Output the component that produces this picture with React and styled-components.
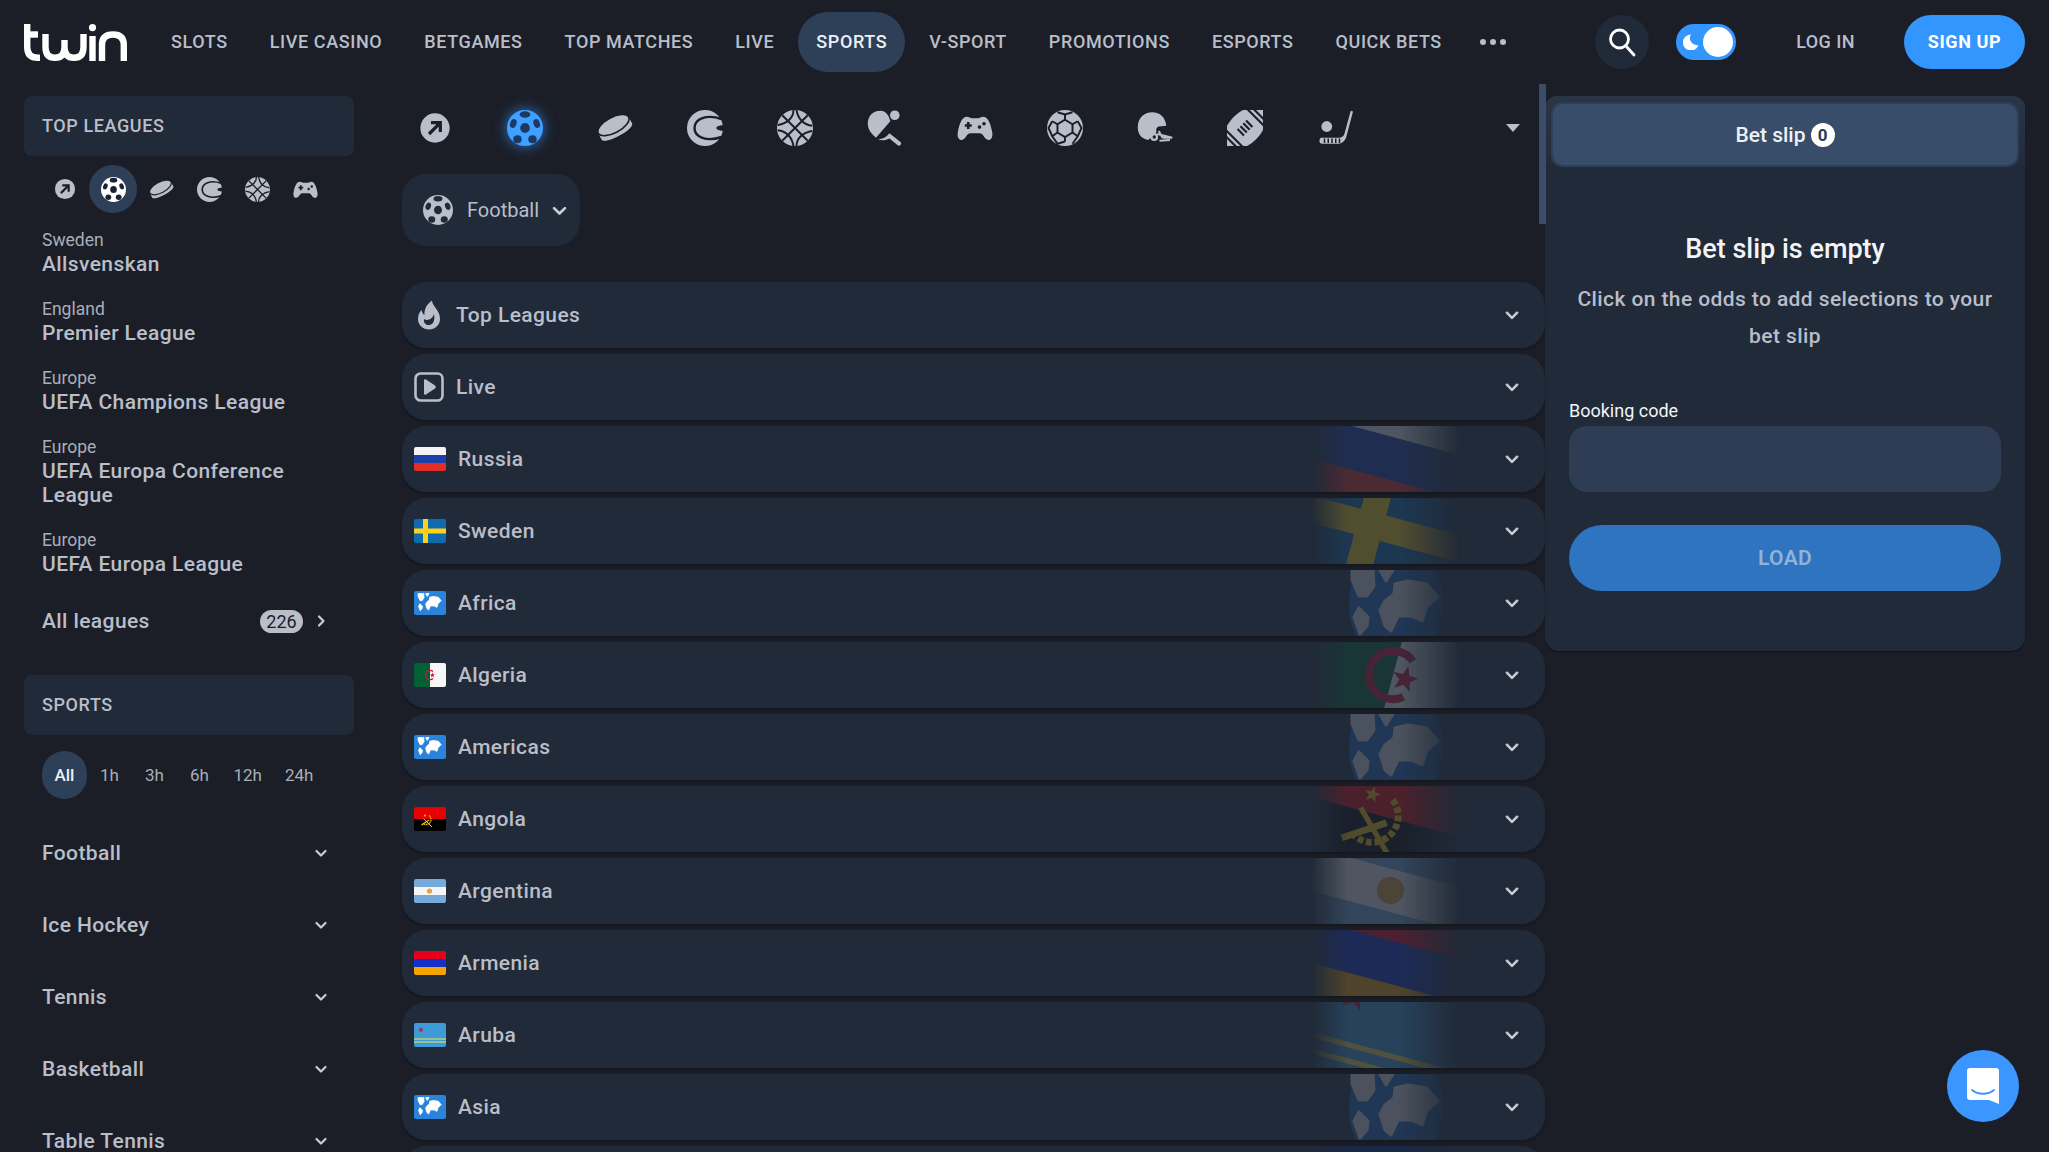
import React from 'react';
import styled, { createGlobalStyle } from 'styled-components';

const BG = '#1b1e27';
const CARD = '#212a38';
const TXT = '#b9bec9';
const HOLE = '#1b1e27';

const Global = createGlobalStyle`
  html, body { margin: 0; padding: 0; height: 100%; overflow: hidden; background: ${BG}; }
  * { box-sizing: border-box; }
  body { font-family: Roboto, "Liberation Sans", sans-serif; color: ${TXT}; }
`;

const Page = styled.div`
  position: relative;
  height: 100vh;
  overflow: hidden;
  background: ${BG};
`;
const Header = styled.header`
  display: flex;
  align-items: center;
  height: 84px;
  padding: 0 24px;
`;
const Logo = styled.svg`
  width: 103px;
  height: 37px;
  flex: none;
  margin-right: 26px;
`;
const Nav = styled.nav`
  display: flex;
  align-items: center;
  gap: 6px;
`;
const NavItem = styled.a`
  display: flex;
  align-items: center;
  height: 60px;
  padding: 0 18px 2px;
  border-radius: 30px;
  font-size: 18px;
  font-weight: 500;
  letter-spacing: 0.6px;
  white-space: nowrap;
  color: ${(p) => (p.$active ? '#eef0f4' : TXT)};
  background: ${(p) => (p.$active ? '#2e3f58' : 'transparent')};
`;
const Dots = styled.div`
  display: flex;
  gap: 4px;
  margin-left: 14px;
  i { width: 6px; height: 6px; border-radius: 50%; background: ${TXT}; display: block; }
`;
const HeaderRight = styled.div`
  margin-left: auto;
  display: flex;
  align-items: center;
`;
const SearchBtn = styled.button`
  width: 54px;
  height: 54px;
  border: 0;
  padding: 0;
  border-radius: 50%;
  background: ${CARD};
  display: flex;
  align-items: center;
  justify-content: center;
  color: #fff;
`;
const Toggle = styled.div`
  position: relative;
  width: 60px;
  height: 36px;
  border-radius: 18px;
  background: #3396ff;
  margin-left: 27px;
  display: flex;
  align-items: center;
  justify-content: flex-end;
  padding-right: 3px;
`;
const Knob = styled.span`
  width: 30px;
  height: 30px;
  border-radius: 50%;
  background: #fff;
`;
const Moon = styled.svg`
  position: absolute;
  left: 7px;
  top: 10px;
  width: 16px;
  height: 16px;
`;
const LogIn = styled.a`
  margin-left: 60px;
  padding-bottom: 2px;
  font-size: 18px;
  font-weight: 500;
  letter-spacing: 0.45px;
  color: ${TXT};
`;
const SignUp = styled.button`
  margin-left: 49px;
  width: 121px;
  height: 54px;
  border: 0;
  padding: 0 0 2px;
  border-radius: 27px;
  background: #3396ff;
  color: #fff;
  font-family: inherit;
  font-size: 18px;
  font-weight: 700;
  letter-spacing: 0.6px;
`;
const Body = styled.main`
  display: grid;
  grid-template-columns: 378px 1143px 480px;
  padding: 12px 0 0 24px;
  align-items: start;
`;
const Left = styled.aside`
  width: 330px;
`;
const Center = styled.section`
  width: 1143px;
  position: relative;
`;
const Right = styled.aside`
  width: 480px;
`;
const BlockHead = styled.div`
  height: 60px;
  border-radius: 8px;
  background: ${CARD};
  padding: 0 0 2px 18px;
  display: flex;
  align-items: center;
  font-size: 18px;
  font-weight: 500;
  letter-spacing: 0.6px;
  color: ${TXT};
  margin-top: ${(p) => p.$top || 0}px;
`;
const MiniIcons = styled.div`
  display: flex;
  margin: 9px 0 15px 17px;
`;
const MiniIcon = styled.div`
  width: 48px;
  height: 48px;
  border-radius: 50%;
  display: flex;
  align-items: center;
  justify-content: center;
  background: ${(p) => (p.$active ? '#2e3f58' : 'transparent')};
  color: ${(p) => (p.$active ? '#fff' : TXT)};
  --hole: ${(p) => (p.$active ? '#1b2230' : HOLE)};
`;
const LeagueList = styled.div`
  padding: 0 18px;
`;
const League = styled.div`
  padding-bottom: 21px;
`;
const LeagueCountry = styled.div`
  font-size: 17.5px;
  line-height: 24px;
  color: #a9aeb9;
`;
const LeagueName = styled.div`
  font-size: 21px;
  line-height: 24px;
  font-weight: 500;
  letter-spacing: 0.4px;
  color: ${TXT};
`;
const AllLeagues = styled.div`
  display: flex;
  align-items: center;
  height: 48px;
  padding: 0 26px 0 18px;
  font-size: 21px;
  font-weight: 500;
  letter-spacing: 0.4px;
  color: ${TXT};
`;
const Count = styled.span`
  margin-left: auto;
  width: 43px;
  height: 23px;
  border-radius: 12px;
  background: ${TXT};
  color: #1b1e27;
  font-size: 18px;
  font-weight: 400;
  letter-spacing: 0;
  display: flex;
  align-items: center;
  justify-content: center;
`;
const CountArrow = styled.span`
  margin-left: 11px;
  display: flex;
`;
const Tabs = styled.div`
  display: flex;
  margin: 16px 0 18px 18px;
`;
const Tab = styled.div`
  height: 48px;
  min-width: 45px;
  padding: 0 11.5px;
  border-radius: 24px;
  display: flex;
  align-items: center;
  justify-content: center;
  font-size: 17px;
  font-weight: ${(p) => (p.$active ? 500 : 400)};
  color: ${(p) => (p.$active ? '#eef0f4' : '#a9aeb9')};
  background: ${(p) => (p.$active ? '#2e3f58' : 'transparent')};
`;
const SportRow = styled.div`
  height: 72px;
  display: flex;
  align-items: center;
  justify-content: space-between;
  padding: 0 26px 0 18px;
  font-size: 21px;
  font-weight: 500;
  letter-spacing: 0.4px;
  color: ${TXT};
`;
const SportStrip = styled.div`
  display: flex;
  align-items: center;
  height: 64px;
  margin-bottom: 14px;
  gap: 24px;
`;
const StripIcon = styled.div`
  width: 66px;
  height: 64px;
  display: flex;
  align-items: center;
  justify-content: center;
  color: ${(p) => (p.$active ? '#3fa0ff' : TXT)};
  --hole: ${(p) => (p.$active ? '#1a3a63' : HOLE)};
  filter: ${(p) => (p.$active ? 'drop-shadow(0 0 7px rgba(51,150,255,.75))' : 'none')};
`;
const Caret = styled.span`
  margin-left: auto;
  margin-right: 25px;
  width: 0;
  height: 0;
  border-left: 7px solid transparent;
  border-right: 7px solid transparent;
  border-top: 8px solid ${TXT};
`;
const Scrollbar = styled.div`
  position: absolute;
  left: 1137px;
  top: -12px;
  width: 7px;
  height: 140px;
  background: #3a4d69;
`;
const Dropdown = styled.div`
  display: flex;
  align-items: center;
  width: 178px;
  height: 72px;
  border-radius: 24px;
  background: ${CARD};
  padding-left: 21px;
  color: ${TXT};
  font-size: 20px;
  --hole: ${CARD};
  span { margin: 0 12px 0 14px; }
`;
const Rows = styled.div`
  display: flex;
  flex-direction: column;
  gap: 6px;
  margin-top: 36px;
`;
const Row = styled.div`
  position: relative;
  height: 66px;
  flex: none;
  border-radius: 24px;
  background: ${CARD};
  overflow: hidden;
  display: flex;
  align-items: center;
  padding: 0 25px 0 12px;
  box-shadow: 0 2px 3px rgba(0, 0, 0, 0.25);
  font-size: 21px;
  font-weight: 500;
  letter-spacing: 0.4px;
  color: ${TXT};
`;
const RowLabel = styled.span`
  margin-left: 12px;
`;
const RowChevron = styled.span`
  margin-left: auto;
  display: flex;
  position: relative;
`;
const Mark = styled.svg`
  position: absolute;
  right: 64px;
  top: 0;
  width: 170px;
  height: 66px;
  opacity: 0.22;
  -webkit-mask-image: linear-gradient(to right, transparent 0, #000 22%, #000 52%, transparent 88%);
  mask-image: linear-gradient(to right, transparent 0, #000 22%, #000 52%, transparent 88%);
`;
const FlagBox = styled.svg`
  width: 32px;
  height: 24px;
  border-radius: 2px;
  flex: none;
`;
const Panel = styled.div`
  height: 555px;
  background: ${CARD};
  border-radius: 12px 12px 14px 14px;
  box-shadow: 0 1px 1px rgba(0, 0, 0, 0.5);
  overflow: hidden;
`;
const SlipTabWrap = styled.div`
  padding: 8px 8px 0;
  background: linear-gradient(#2a3546, ${CARD} 80px);
`;
const SlipTab = styled.div`
  height: 61px;
  border-radius: 10px;
  background: #384d69;
  box-shadow: 0 0 0 2px #2f3e54;
  display: flex;
  align-items: center;
  justify-content: center;
  gap: 5px;
  color: #eef1f6;
  font-size: 21px;
  font-weight: 500;
`;
const SlipCount = styled.span`
  width: 24px;
  height: 24px;
  border-radius: 50%;
  background: #fff;
  color: #2c3b50;
  font-size: 17px;
  font-weight: 700;
  display: flex;
  align-items: center;
  justify-content: center;
`;
const PanelBody = styled.div`
  padding: 66px 24px 0;
`;
const Title = styled.div`
  text-align: center;
  font-size: 27px;
  line-height: 36px;
  font-weight: 500;
  color: #f2f4f7;
`;
const Desc = styled.div`
  margin: 14px 0 44px;
  text-align: center;
  font-size: 21px;
  line-height: 37px;
  font-weight: 500;
  letter-spacing: 0.4px;
  color: ${TXT};
`;
const FieldLabel = styled.div`
  font-size: 18px;
  line-height: 24px;
  color: #f2f4f7;
  margin-bottom: 3px;
`;
const Input = styled.div`
  height: 66px;
  border-radius: 18px;
  background: #2e3d53;
  margin-bottom: 33px;
`;
const Load = styled.button`
  display: block;
  width: 100%;
  height: 66px;
  border: 0;
  border-radius: 33px;
  background: #2e74c0;
  color: #92b3d8;
  font-family: inherit;
  font-size: 21px;
  font-weight: 600;
  letter-spacing: 0.4px;
`;
const Chat = styled.div`
  position: absolute;
  left: 1947px;
  top: 1050px;
  width: 72px;
  height: 72px;
  border-radius: 50%;
  background: #3b96ff;
  display: flex;
  align-items: center;
  justify-content: center;
`;

const Chevron = ({ size = 14, dir = 'down', color = '#c7ccd6' }) => (
  <svg width={size} height={size} viewBox="0 0 14 14" fill="none" stroke={color} strokeWidth="2.2" strokeLinecap="round" strokeLinejoin="round">
    {dir === 'down' ? <path d="M2.5 5 L7 9.5 L11.5 5" /> : <path d="M5 2.5 L9.5 7 L5 11.5" />}
  </svg>
);

const I = ({ size = 36, children, vb = '0 0 24 24' }) => (
  <svg width={size} height={size} viewBox={vb} fill="currentColor">
    {children}
  </svg>
);
const H = 'var(--hole)';

const Icons = {
  arrow: (s) => (
    <I size={s}>
      <circle cx="12" cy="12" r="11" />
      <path d="M7.5 16.5 L15.5 8.5 M9 8 H16 V15" fill="none" stroke={H} strokeWidth="2.4" />
    </I>
  ),
  soccer: (s) => (
    <I size={s}>
      <circle cx="12" cy="12" r="12" />
      <g fill={H}>
        <ellipse cx="12" cy="3" rx="3.6" ry="2.2" />
        <ellipse cx="12" cy="12" rx="3.2" ry="3.4" />
        <ellipse cx="4.2" cy="9" rx="2.1" ry="3" transform="rotate(20 4.2 9)" />
        <ellipse cx="19.8" cy="9" rx="2.1" ry="3" transform="rotate(-20 19.8 9)" />
        <ellipse cx="7" cy="19.5" rx="2.8" ry="2.6" />
        <ellipse cx="17" cy="19.5" rx="2.8" ry="2.6" />
      </g>
    </I>
  ),
  puck: (s) => (
    <I size={s}>
      <g transform="rotate(-28 12 12)">
        <path d="M0.5 10 V14.5 C0.5 19 23.5 19 23.5 14.5 V10 Z" />
        <ellipse cx="12" cy="9.8" rx="11.5" ry="5.2" stroke={H} strokeWidth="1.1" />
      </g>
    </I>
  ),
  tennis: (s) => (
    <I size={s}>
      <circle cx="12" cy="12" r="12" />
      <path d="M23 6 C13 2.5 5 6 5 12 C5 18 13 21.5 23 18" fill="none" stroke={H} strokeWidth="1.6" />
      <path d="M24 10 C21 10.5 19.5 11 19.5 12 C19.5 13 21 13.5 24 14" fill={H} />
    </I>
  ),
  basket: (s) => (
    <I size={s}>
      <circle cx="12" cy="12" r="12" />
      <g fill="none" stroke={H} strokeWidth="1.3">
        <path d="M3.5 3.5 L20.5 20.5 M20.5 3.5 L3.5 20.5" />
        <path d="M11 0 C11 5 7 9 0.5 10" />
        <path d="M13 24 C13 19 17 15 23.5 14" />
        <path d="M13 0 C14 6 18 10 23.5 10.5" />
        <path d="M11 24 C10 18 6 14 0.5 13.5" />
      </g>
    </I>
  ),
  pingpong: (s) => (
    <I size={s}>
      <path d="M9 0.5 C3.5 0.5 0.5 4.5 0.5 9 C0.5 13 3 16 6 18.5 L15.5 7.5 C14.5 3.5 12.5 0.5 9 0.5 Z" />
      <circle cx="18.5" cy="3.5" r="3.2" />
      <path d="M7.5 19.5 C10.5 19.5 13 18 15 15.5 L22.5 21.5 C23.5 23 21.5 24.5 20.5 23.5 L15 19 C12 20.5 9.5 20.5 7.5 19.5 Z" />
    </I>
  ),
  gamepad: (s) => (
    <I size={s}>
      <path d="M6.5 4.5 C8 4.5 9 5.5 10 5.5 H14 C15 5.5 16 4.5 17.5 4.5 C20.5 4.5 22.5 9 23.5 15 C24 18.5 22.5 20 21 20 C19.5 20 18.5 18.5 17.5 17 C16.8 16 16 15.5 15 15.5 H9 C8 15.5 7.2 16 6.5 17 C5.5 18.5 4.5 20 3 20 C1.5 20 0 18.5 0.5 15 C1.5 9 3.5 4.5 6.5 4.5 Z" />
      <path d="M7.5 8 V12.6 M5.2 10.3 H9.8" stroke={H} strokeWidth="1.7" fill="none" />
      <circle cx="15" cy="11.4" r="1.2" fill={H} />
      <circle cx="18" cy="9.2" r="1.2" fill={H} />
    </I>
  ),
  hexball: (s) => (
    <I size={s}>
      <circle cx="12" cy="12" r="12" />
      <g fill="none" stroke={H} strokeWidth="1.3">
        <path d="M12 6.5 L17 9.5 V15 L12 18 L7 15 V9.5 Z" />
        <path d="M12 6.5 V3 M17 9.5 L20.5 7.5 M17 15 L20.5 17.5 M12 18 V21 M7 15 L3.5 17.5 M7 9.5 L3.5 7.5" />
        <path d="M7 1.5 L12 3 L17 1.5 M20.5 7.5 L23 12 L20.5 17.5 L17 22.5 M12 21 L7 22.5 L3.5 17.5 L1 12 L3.5 7.5" />
      </g>
    </I>
  ),
  helmet: (s) => (
    <I size={s}>
      <path d="M0.5 11.5 C0.5 5 5 1.5 10 1.5 C15.5 1.5 19 5 19.5 10.5 L14.5 11 C13 11.5 12.5 13 13 14.5 L11 17.5 C9 18.5 8 19.5 7.5 20 C4 19.5 0.5 17 0.5 11.5 Z" />
      <circle cx="11.5" cy="18" r="2.6" />
      <circle cx="11.5" cy="18" r="1.1" fill={H} />
      <path d="M13.5 16 L23.5 18.5 L17 18.5 M15 20.5 L22 20 M14.5 14 L17 18.5" fill="none" stroke="currentColor" strokeWidth="1.3" />
    </I>
  ),
  rugby: (s) => (
    <I size={s}>
      <g transform="rotate(-45 12 12)">
        <ellipse cx="12" cy="12" rx="17" ry="10.5" />
        <g stroke={H} strokeWidth="1.4" fill="none">
          <path d="M-1 1 V23 M2 1 V23 M22 1 V23 M25 1 V23" />
          <path d="M8 9 V15 M10.7 9 V15 M13.4 9 V15 M16 9 V15" />
        </g>
      </g>
    </I>
  ),
  stick: (s) => (
    <I size={s}>
      <path d="M22.5 0.5 L24 1 L19.5 18 C18.5 21 16.5 22.5 14 22.5 L3.5 22.5 C1.5 22.5 1 20 2.5 18.5 L15 18.5 C17 18.5 18 17 18.4 15.5 Z" />
      <circle cx="6.5" cy="11" r="3.6" />
      <path d="M5 19 V22 M7.5 19 V22 M10 19 V22 M12.5 19 V22 M15 19 V22" stroke={H} strokeWidth="1" fill="none" />
    </I>
  ),
};

const Land = ({ fill }) => (
  <g fill={fill} stroke={fill} strokeWidth="3" strokeLinejoin="round">
    <path d="M84 14 L97 11 L116 14 L127 27 L116 36 L111 51 L100 46 L87 46 L80 61 L74 56 L69 40 L74 31 L83 24 Z" />
    <path d="M41 0 L62 0 L63 16 L56 26 L48 26 L41 10 Z" />
    <path d="M48 38 L57 47 L56 56 L49 64 L43 47 Z" />
    <path d="M69 0 L82 0 L75 11 Z" />
  </g>
);

const star = (cx, cy, r) => {
  const p = [];
  for (let i = 0; i < 10; i += 1) {
    const a = (Math.PI / 5) * i - Math.PI / 2;
    const d = i % 2 ? r * 0.42 : r;
    p.push(`${(cx + d * Math.cos(a)).toFixed(2)},${(cy + d * Math.sin(a)).toFixed(2)}`);
  }
  return p.join(' ');
};

const Art = {
  russia: (
    <>
      <rect width="32" height="8" fill="#f4f4f4" />
      <rect y="8" width="32" height="8" fill="#1c3faa" />
      <rect y="16" width="32" height="8" fill="#e12f26" />
    </>
  ),
  sweden: (
    <>
      <rect width="32" height="24" fill="#0f6bb0" />
      <rect x="9" width="5" height="24" fill="#fcd116" />
      <rect y="9.5" width="32" height="5" fill="#fcd116" />
    </>
  ),
  world: (
    <>
      <rect width="32" height="24" fill="#2b84dc" />
      <g transform="translate(-7 2.5) scale(.27)">
        <Land fill="#fff" />
      </g>
    </>
  ),
  algeria: (
    <>
      <rect width="16" height="24" fill="#006233" />
      <rect x="16" width="16" height="24" fill="#f6f6f6" />
      <path d="M19 8.5 A4.6 4.6 0 1 0 19 15.5" fill="none" stroke="#d21034" strokeWidth="1.5" />
      <polygon points={star(18.4, 12.2, 2.6)} fill="#d21034" />
    </>
  ),
  angola: (
    <>
      <rect width="32" height="12" fill="#e60000" />
      <rect y="12" width="32" height="12" fill="#000" />
      <path d="M15 8.5 A5 5 0 1 1 9 16.5" fill="none" stroke="#f5c400" strokeWidth="1.3" strokeDasharray="1.1 .5" />
      <path d="M9.5 11.5 L18 20" stroke="#f5c400" strokeWidth="1" />
      <path d="M7.5 18 L15 13" stroke="#f5c400" strokeWidth="1.3" />
      <polygon points={star(11, 8.5, 1.6)} fill="#f5c400" />
    </>
  ),
  argentina: (
    <>
      <rect width="32" height="24" fill="#75aadb" />
      <rect y="8" width="32" height="8" fill="#f6f6f6" />
      <circle cx="15.5" cy="12" r="2.6" fill="#e8a33c" />
    </>
  ),
  armenia: (
    <>
      <rect width="32" height="8" fill="#e6001a" />
      <rect y="8" width="32" height="8" fill="#1330c8" />
      <rect y="16" width="32" height="8" fill="#f5a400" />
    </>
  ),
  aruba: (
    <>
      <rect width="32" height="24" fill="#3f9bd6" />
      <polygon points={star(7, 6.7, 3)} fill="#d0103a" />
      <rect y="15.5" width="32" height="1" fill="#f7e84b" />
      <rect y="18.5" width="32" height="1" fill="#f7e84b" />
    </>
  ),
  australia: (
    <>
      <rect width="32" height="24" fill="#00247d" />
      <rect width="14" height="4" x="2" y="-3" fill="#f6f6f6" />
      <rect width="14" height="2" x="4" y="-2" fill="#cf142b" />
    </>
  ),
};

const FlagIcon = ({ name }) => (
  <FlagBox viewBox="0 0 32 24" preserveAspectRatio="xMidYMid slice">
    {Art[name]}
  </FlagBox>
);

const Watermark = ({ name }) => (
  <Mark viewBox="0 0 170 66">
    {name === 'world' ? (
      <>
        <ellipse cx="85" cy="33" rx="47" ry="62" fill="#1f66bd" />
        <Land fill="#e4e4e4" />
      </>
    ) : (
      <g transform="translate(82 33) rotate(15) scale(5.25) translate(-16 -12)">{Art[name]}</g>
    )}
  </Mark>
);

const Fire = () => (
  <svg width="30" height="30" viewBox="0 0 30 30" fill={TXT}>
    <path d="M18 0.5 C18 6 26 10 26 19 C26 25 21 29.5 15 29.5 C9 29.5 4 25 4 19 C4 15 5.5 12 7.5 10 C8 12.5 9 14 10.5 15 C10 9 13 4 18 0.5 Z" />
    <path d="M20 14 C21 19 20 24.5 15.5 25 C11 25.5 9.5 22 10 19 C13 21 18 20 20 14 Z" fill={CARD} />
  </svg>
);
const LiveIcon = () => (
  <svg width="30" height="30" viewBox="0 0 30 30">
    <rect x="1.5" y="1.5" width="27" height="27" rx="5" fill="none" stroke={TXT} strokeWidth="2.6" />
    <path d="M10 8.5 C10 7.5 11 7 12 7.6 L21 13.5 C22 14.2 22 15.8 21 16.5 L12 22.4 C11 23 10 22.5 10 21.5 Z" fill={TXT} />
  </svg>
);

const navItems = ['SLOTS', 'LIVE CASINO', 'BETGAMES', 'TOP MATCHES', 'LIVE', 'SPORTS', 'V-SPORT', 'PROMOTIONS', 'ESPORTS', 'QUICK BETS'];
const leagues = [
  ['Sweden', 'Allsvenskan'],
  ['England', 'Premier League'],
  ['Europe', 'UEFA Champions League'],
  ['Europe', 'UEFA Europa Conference League'],
  ['Europe', 'UEFA Europa League'],
];
const stripIcons = ['arrow', 'soccer', 'puck', 'tennis', 'basket', 'pingpong', 'gamepad', 'hexball', 'helmet', 'rugby', 'stick'];
const miniIcons = ['arrow', 'soccer', 'puck', 'tennis', 'basket', 'gamepad'];
const sportsList = ['Football', 'Ice Hockey', 'Tennis', 'Basketball', 'Table Tennis'];
const rows = [
  ['Top Leagues', null, 'fire'],
  ['Live', null, 'live'],
  ['Russia', 'russia'],
  ['Sweden', 'sweden'],
  ['Africa', 'world'],
  ['Algeria', 'algeria'],
  ['Americas', 'world'],
  ['Angola', 'angola'],
  ['Argentina', 'argentina'],
  ['Armenia', 'armenia'],
  ['Aruba', 'aruba'],
  ['Asia', 'world'],
];

export default function App() {
  return (
    <Page>
      <Global />
      <Header>
        <Logo viewBox="0 0 103 37" fill="none" stroke="#fff" strokeWidth="6.4">
          <path d="M3.2 0 V23 Q3.2 33.8 14 33.8 H16" />
          <path d="M0 10.5 H14" />
          <path d="M21.5 10 V23 Q21.5 33.8 31 33.8 Q40.5 33.8 40.5 23 V16 M40.5 23 Q40.5 33.8 50 33.8 Q59.5 33.8 59.5 23 V10" />
          <path d="M68.5 12 V37" />
          <circle cx="68.5" cy="3.6" r="3.6" fill="#fff" stroke="none" />
          <path d="M78 37 V21 Q78 10.5 89 10.5 Q99.8 10.5 99.8 21 V37" />
        </Logo>
        <Nav>
          {navItems.map((n) => (
            <NavItem key={n} $active={n === 'SPORTS'}>
              {n}
            </NavItem>
          ))}
          <Dots>
            <i />
            <i />
            <i />
          </Dots>
        </Nav>
        <HeaderRight>
          <SearchBtn>
            <svg width="30" height="30" viewBox="0 0 30 30" fill="none" stroke="#fff" strokeWidth="2.8" strokeLinecap="round">
              <circle cx="12.5" cy="12" r="9" />
              <path d="M19 19 L27 28" />
            </svg>
          </SearchBtn>
          <Toggle>
            <Moon viewBox="0 0 16 16">
              <path d="M8 0.5 A8 8 0 1 0 15.5 11 A7 7 0 0 1 8 0.5 Z" fill="#fff" />
            </Moon>
            <Knob />
          </Toggle>
          <LogIn>LOG IN</LogIn>
          <SignUp>SIGN UP</SignUp>
        </HeaderRight>
      </Header>
      <Body>
        <Left>
          <BlockHead>TOP LEAGUES</BlockHead>
          <MiniIcons>
            {miniIcons.map((k) => (
              <MiniIcon key={k} $active={k === 'soccer'}>
                {Icons[k](k === 'arrow' ? 22 : 25)}
              </MiniIcon>
            ))}
          </MiniIcons>
          <LeagueList>
            {leagues.map(([c, n]) => (
              <League key={n}>
                <LeagueCountry>{c}</LeagueCountry>
                <LeagueName>{n}</LeagueName>
              </League>
            ))}
          </LeagueList>
          <AllLeagues>
            All leagues
            <Count>226</Count>
            <CountArrow>
              <Chevron dir="right" />
            </CountArrow>
          </AllLeagues>
          <BlockHead $top={30}>SPORTS</BlockHead>
          <Tabs>
            {['All', '1h', '3h', '6h', '12h', '24h'].map((t) => (
              <Tab key={t} $active={t === 'All'}>
                {t}
              </Tab>
            ))}
          </Tabs>
          {sportsList.map((s) => (
            <SportRow key={s}>
              {s}
              <Chevron />
            </SportRow>
          ))}
        </Left>
        <Center>
          <Scrollbar />
          <SportStrip>
            {stripIcons.map((k) => (
              <StripIcon key={k} $active={k === 'soccer'}>
                {Icons[k](k === 'arrow' ? 32 : 36)}
              </StripIcon>
            ))}
            <Caret />
          </SportStrip>
          <Dropdown>
            {Icons.soccer(30)}
            <span>Football</span>
            <Chevron size={17} />
          </Dropdown>
          <Rows>
            {rows.map(([name, flag, icon]) => (
              <Row key={name}>
                {flag && <Watermark name={flag} />}
                {flag ? <FlagIcon name={flag} /> : icon === 'live' ? <LiveIcon /> : <Fire />}
                <RowLabel>{name}</RowLabel>
                <RowChevron>
                  <Chevron size={16} />
                </RowChevron>
              </Row>
            ))}
            <Row>
              <Watermark name="australia" />
            </Row>
          </Rows>
        </Center>
        <Right>
          <Panel>
            <SlipTabWrap>
              <SlipTab>
                Bet slip
                <SlipCount>0</SlipCount>
              </SlipTab>
            </SlipTabWrap>
            <PanelBody>
              <Title>Bet slip is empty</Title>
              <Desc>Click on the odds to add selections to your bet slip</Desc>
              <FieldLabel>Booking code</FieldLabel>
              <Input />
              <Load>LOAD</Load>
            </PanelBody>
          </Panel>
        </Right>
      </Body>
      <Chat>
        <svg width="34" height="38" viewBox="0 0 34 38">
          <path d="M4 1 H30 C32 1 33 2 33 4 V37 L23 33 H4 C2 33 1 32 1 30 V4 C1 2 2 1 4 1 Z" fill="#fff" />
          <path d="M6 23 C12 28 22 28 28 23" fill="none" stroke="#3b96ff" strokeWidth="1.8" strokeLinecap="round" />
        </svg>
      </Chat>
    </Page>
  );
}
